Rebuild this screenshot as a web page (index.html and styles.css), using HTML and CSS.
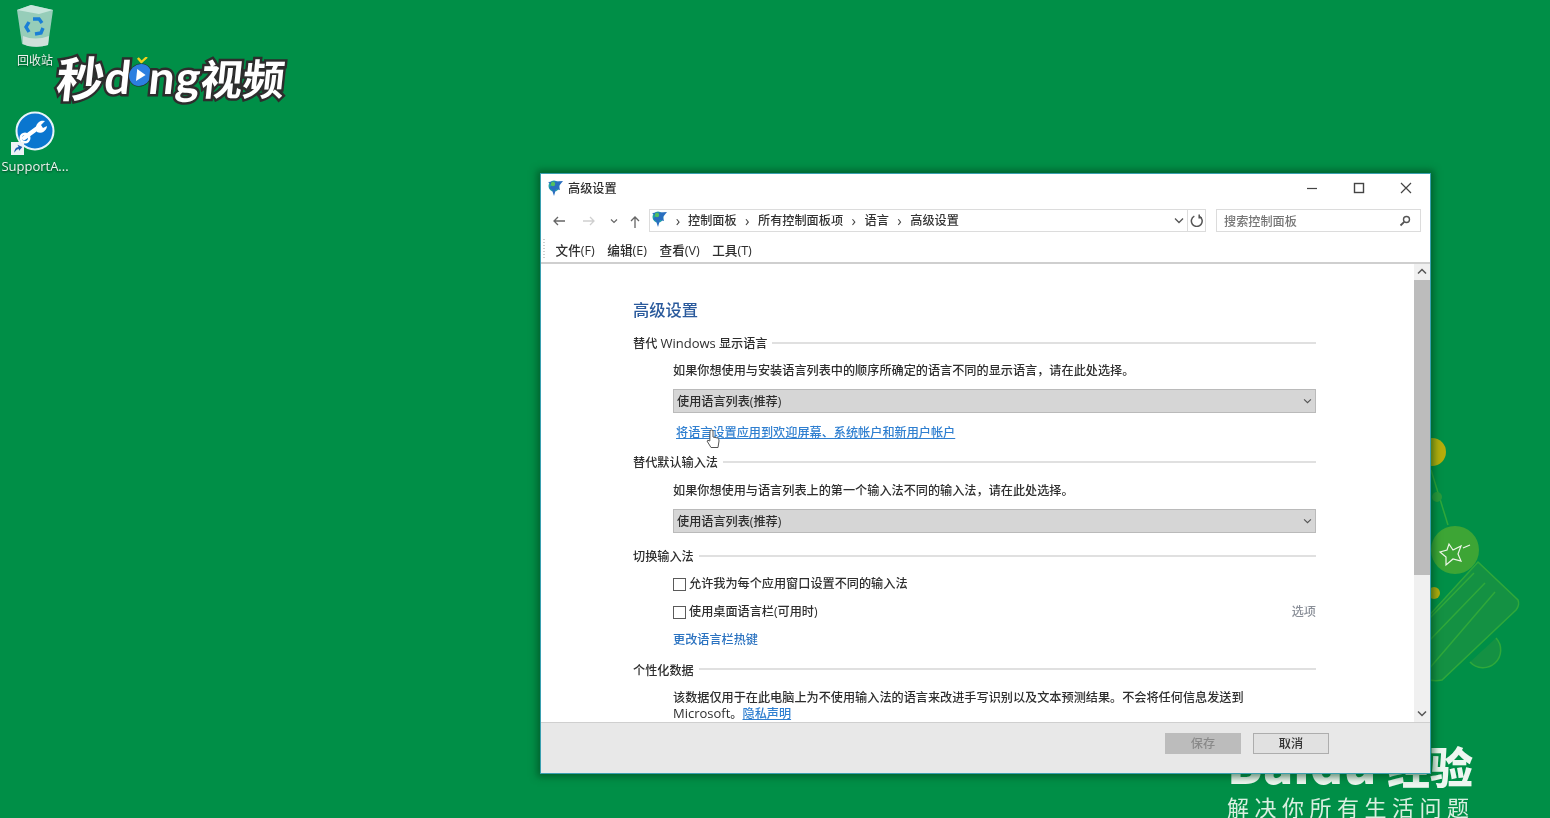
FILE: index.html
```html
<!DOCTYPE html>
<html lang="zh-CN">
<head>
<meta charset="utf-8">
<title>高级设置</title>
<link rel="stylesheet" href="styles.css">
</head>
<body>
<div class="desktop">
  <div class="desk-icon bin-icon">
    <svg width="40" height="44" viewBox="0 0 40 44">
      <path d="M2 6 L16 1 L38 6 L33 41 Q24 44 13 42 L7 40 Z" fill="#96cdb9"/>
      <path d="M2 6 L16 1 L38 6 L24 10 Z" fill="#c8e6dc"/>
      <path d="M8 32 Q20 37 34 32 L33 41 Q24 44 13 42 L8 40 Z" fill="#cfe0da"/>
      <path d="M18 15 l6 0 l3 4 M28 24 l-2 5 l-6 1 M14 28 l-3-5 l3-5" fill="none" stroke="#1a7fd6" stroke-width="3.4"/>
    </svg>
    <span class="desk-label bin-label">回收站</span>
  </div>
  <div class="desk-icon support-icon">
    <div class="support-glyph">
      <svg width="40" height="40" viewBox="0 0 40 40">
        <circle cx="20" cy="20" r="18.5" fill="#0a76cf" stroke="#e8f4fa" stroke-width="2"/>
        <path d="M9 27 L24 16" stroke="#fff" stroke-width="4.5" stroke-linecap="round"/>
        <circle cx="10" cy="27" r="4.2" fill="none" stroke="#fff" stroke-width="2.6"/>
        <path d="M21 17 a7 7 0 0 1 9-7 l-4 4 l2 3 l4-2 a7 7 0 0 1-10 6 Z" fill="#fff"/>
      </svg>
      <svg class="shortcut" width="13" height="13" viewBox="0 0 12 12">
        <rect width="12" height="12" fill="#eef2f5"/>
        <path d="M3 10 Q3 5 7 4.5 L6 2.5 L10.5 4.5 L7.5 8 L7 6.2 Q5 6.5 3 10 Z" fill="#1b5fb0"/>
      </svg>
    </div>
    <span class="desk-label support-label">SupportA...</span>
  </div>

  <div class="logo">
    <span class="logo-cjk logo-first">秒</span><span class="logo-latin">d</span><span class="logo-play"><svg width="24" height="30" viewBox="0 0 24 30"><path d="M8 1 L12 5 L17 0" fill="none" stroke="#f3d21c" stroke-width="2.4"/><circle cx="12" cy="18" r="11" fill="#2c7fe0" stroke="#2b2b2b" stroke-width="1"/><path d="M8.5 12 L17.5 18 L8.5 24 Z" fill="#fff"/></svg></span><span class="logo-latin">ng</span><span class="logo-cjk">视频</span>
  </div>

  <svg class="tree" width="110" height="270" viewBox="0 0 110 270">
    <circle cx="12" cy="22" r="14" fill="#b5ad0b"/>
    <path d="M11 40 L28 95" stroke="#2fa83a" stroke-width="1.5"/>
    <circle cx="17" cy="67" r="5" fill="#2a9a3c"/>
    <path d="M58 132 L98 170 Q100 175 96 180 L22 250 Q12 252 5 248 L5 190 Z" fill="#149143" stroke="#2fa83a" stroke-width="1.5"/>
    <path d="M54 143 L8 190 M65 153 L8 212 M75 162 L8 240" stroke="#2fa83a" stroke-width="1.5"/>
    <path d="M76 208 A14 14 0 0 1 50 232" fill="#149143" stroke="#2fa83a" stroke-width="1.5"/>
    <circle cx="14" cy="163" r="6" fill="#b5ad0b"/>
    <circle cx="35" cy="120" r="24" fill="#3da535"/>
    <path d="M29 114 L33 120 L41 116 L38 124 L41 131 L33 129 L26 135 L26 127 L20 122 L27 120 Z" fill="none" stroke="#f0f6ea" stroke-width="1.2"/>
    <path d="M43 118 L50 115" stroke="#f0f6ea" stroke-width="1.2"/>
  </svg>

  <div class="watermark">
    <div class="wm-brand"><span class="wm-latin">Baidu</span>经验</div>
    <div class="wm-slogan">解决你所有生活问题</div>
  </div>

  <section class="window">
    <header class="titlebar">
      <svg class="globe" width="17" height="17" viewBox="0 0 17 17">
        <circle cx="7" cy="6" r="5.5" fill="#1fa0a8"/>
        <path d="M1 2 L16 1 L12 6 L13 10 L9 9 L7 16 L5 10 L2 8 L5 5 Z" fill="#2a6fc0"/>
        <circle cx="6" cy="4" r="2.2" fill="#55c060"/>
      </svg>
      <span class="title-text">高级设置</span>
      <div class="window-controls">
        <svg width="12" height="12" viewBox="0 0 12 12"><path d="M1 6.5 H11" stroke="#444" stroke-width="1.2"/></svg>
        <svg width="12" height="12" viewBox="0 0 12 12"><rect x="1.5" y="1.5" width="9" height="9" fill="none" stroke="#444" stroke-width="1.4"/></svg>
        <svg width="12" height="12" viewBox="0 0 12 12"><path d="M1 1 L11 11 M11 1 L1 11" stroke="#444" stroke-width="1.2"/></svg>
      </div>
    </header>

    <div class="navbar">
      <div class="nav-buttons">
        <svg width="14" height="12" viewBox="0 0 14 12"><path d="M13 6 H2 M6 2 L2 6 L6 10" fill="none" stroke="#666" stroke-width="1.3"/></svg>
        <svg class="nav-forward" width="14" height="12" viewBox="0 0 14 12"><path d="M1 6 H12 M8 2 L12 6 L8 10" fill="none" stroke="#cfcfcf" stroke-width="1.3"/></svg>
        <svg class="nav-recent" width="8" height="6" viewBox="0 0 8 6"><path d="M1 1.5 L4 4.5 L7 1.5" fill="none" stroke="#666" stroke-width="1.2"/></svg>
        <svg class="nav-up" width="12" height="14" viewBox="0 0 12 14"><path d="M6 13 V2 M2 6 L6 2 L10 6" fill="none" stroke="#666" stroke-width="1.3"/></svg>
      </div>
      <div class="address">
        <div class="crumbs">
          <svg width="17" height="17" viewBox="0 0 17 17">
            <circle cx="7" cy="6" r="5.5" fill="#1fa0a8"/>
            <path d="M1 2 L16 1 L12 6 L13 10 L9 9 L7 16 L5 10 L2 8 L5 5 Z" fill="#2a6fc0"/>
            <circle cx="6" cy="4" r="2.2" fill="#55c060"/>
          </svg>
          <span class="crumb-sep first">›</span><span>控制面板</span>
          <span class="crumb-sep">›</span><span>所有控制面板项</span>
          <span class="crumb-sep">›</span><span>语言</span>
          <span class="crumb-sep">›</span><span>高级设置</span>
        </div>
        <svg class="address-chevron" width="10" height="7" viewBox="0 0 10 7"><path d="M1 1.5 L5 5.5 L9 1.5" fill="none" stroke="#555" stroke-width="1.3"/></svg>
        <span class="refresh">
          <svg width="13" height="13" viewBox="0 0 12 12"><path d="M4 2 A5 5 0 1 0 8.5 2 M8.5 0.5 V3.5 H11" fill="none" stroke="#555" stroke-width="1.4"/></svg>
        </span>
      </div>
      <div class="search">
        <span>搜索控制面板</span>
        <svg width="12" height="12" viewBox="0 0 12 12"><circle cx="7.5" cy="4.5" r="3" fill="none" stroke="#555" stroke-width="1.4"/><path d="M5.2 6.8 L1.5 10.5" stroke="#555" stroke-width="1.8"/></svg>
      </div>
    </div>

    <nav class="menubar">
      <span class="menu-grip"></span>
      <span>文件(F)</span>
      <span>编辑(E)</span>
      <span>查看(V)</span>
      <span>工具(T)</span>
    </nav>

    <div class="pane">
      <main class="content">
        <h1 class="page-title">高级设置</h1>

        <section class="group">
          <h2 class="group-head"><span>替代 <span class="latin">Windows</span> 显示语言</span></h2>
          <div class="group-body">
            <p class="row">如果你想使用与安装语言列表中的顺序所确定的语言不同的显示语言，请在此处选择。</p>
            <div class="select">
              <span>使用语言列表(推荐)</span>
              <svg width="9" height="6" viewBox="0 0 10 7"><path d="M1 1.5 L5 5.5 L9 1.5" fill="none" stroke="#555" stroke-width="1.3"/></svg>
            </div>
            <a class="link wide-link">将语言设置应用到欢迎屏幕、系统帐户和新用户帐户</a>
          </div>
        </section>

        <section class="group tall">
          <h2 class="group-head spaced"><span>替代默认输入法</span></h2>
          <div class="group-body">
            <p class="row">如果你想使用与语言列表上的第一个输入法不同的输入法，请在此处选择。</p>
            <div class="select">
              <span>使用语言列表(推荐)</span>
              <svg width="9" height="6" viewBox="0 0 10 7"><path d="M1 1.5 L5 5.5 L9 1.5" fill="none" stroke="#555" stroke-width="1.3"/></svg>
            </div>
          </div>
        </section>

        <section class="group short">
          <h2 class="group-head spaced"><span>切换输入法</span></h2>
          <div class="group-body roomy">
            <label class="check"><span class="box"></span>允许我为每个应用窗口设置不同的输入法</label>
            <div class="check-row">
              <label class="check"><span class="box"></span>使用桌面语言栏(可用时)</label>
              <span class="muted">选项</span>
            </div>
            <a class="link plain-link">更改语言栏热键</a>
          </div>
        </section>

        <section class="group last">
          <h2 class="group-head spaced"><span>个性化数据</span></h2>
          <div class="group-body">
            <p class="row">该数据仅用于在此电脑上为不使用输入法的语言来改进手写识别以及文本预测结果。不会将任何信息发送到<br><span class="latin">Microsoft</span>。<a class="link">隐私声明</a></p>
          </div>
        </section>
      </main>

      <aside class="scrollbar">
        <svg width="10" height="7" viewBox="0 0 10 7"><path d="M1 5.5 L5 1.5 L9 5.5" fill="none" stroke="#555" stroke-width="1.5"/></svg>
        <div class="thumb"></div>
        <svg class="scroll-down" width="10" height="7" viewBox="0 0 10 7"><path d="M1 1.5 L5 5.5 L9 1.5" fill="none" stroke="#555" stroke-width="1.5"/></svg>
      </aside>
    </div>

    <footer class="actions">
      <button class="btn disabled">保存</button>
      <button class="btn">取消</button>
    </footer>

    <svg class="cursor" width="16" height="20" viewBox="0 0 16 20">
      <path d="M5 1.5 Q6.5 0.5 8 1.5 L8 8 L12.5 9 Q14.5 10 14 12 L13 18.5 H6 L2 12 Q2 10.5 4.8 12 Z" fill="#fff" stroke="#555" stroke-width="1"/>
    </svg>
  </section>
</div>
</body>
</html>
```

FILE: styles.css
```css
* { box-sizing: border-box; }

html, body {
  margin: 0;
  height: 100%;
  overflow: hidden;
}

body {
  font-family: "Open Sans", "Noto Sans CJK SC", sans-serif;
  font-size: 12.15px;
  font-weight: 500;
  color: #2e2e2e;
}

.latin { font-size: 13px; line-height: 0; }

.desktop {
  position: relative;
  width: 1550px;
  height: 818px;
  overflow: hidden;
  background: #008f47;
  filter: blur(0.35px);
}

/* Desktop icons sit on a free canvas */
.desk-icon {
  position: absolute;
  display: flex;
  flex-direction: column;
  align-items: center;
  width: 70px;
}

.bin-icon { left: 0; top: 4px; }
.support-icon { left: 0; top: 111px; }

.support-glyph { position: relative; height: 40px; }

.shortcut {
  position: absolute;
  left: -4px;
  top: 31px;
}

.desk-label {
  color: #eef5f0;
  font-weight: 400;
  text-shadow: 0 1px 2px rgba(0, 0, 0, .55);
  white-space: nowrap;
}

.bin-label { margin-top: 5px; font-size: 12px; line-height: 16px; }
.support-label { margin-top: 7px; font-size: 13px; line-height: 16px; }

.logo {
  position: absolute;
  left: 57px;
  top: 46px;
  display: flex;
  align-items: center;
  height: 60px;
  color: #fff;
  font-weight: 700;
  -webkit-text-stroke: 5px #2d2d2d;
  paint-order: stroke fill;
  transform: skewX(-6deg);
}

.logo-cjk { font-family: "Noto Sans CJK SC", sans-serif; font-size: 42px; }
.logo-first { font-size: 48px; }
.logo-latin { font-family: "Lato", sans-serif; font-size: 46px; letter-spacing: 1px; }
.logo-play { display: flex; margin: -8px -3px 0 -4px; }

.tree {
  position: absolute;
  left: 1420px;
  top: 430px;
}

.watermark {
  position: absolute;
  left: 1227px;
  top: 737px;
  width: 246px;
  color: #fff;
}

.wm-brand {
  display: flex;
  align-items: baseline;
  justify-content: space-between;
  height: 50px;
  font-family: "Noto Sans CJK SC", sans-serif;
  font-size: 43px;
  font-weight: 900;
  line-height: 50px;
  white-space: nowrap;
  color: #eef6f0;
}

.wm-latin { font-size: 51px; line-height: 50px; }

.wm-slogan {
  margin-top: 6px;
  font-family: "Noto Sans CJK SC", sans-serif;
  font-size: 22px;
  font-weight: 400;
  line-height: 26px;
  letter-spacing: 5.5px;
  white-space: nowrap;
  color: #d9efe0;
}

/* Window */
.window {
  position: absolute;
  left: 540px;
  top: 173px;
  width: 891px;
  height: 601px;
  display: flex;
  flex-direction: column;
  background: #fff;
  border: 1px solid #3aa0b0;
  box-shadow: 0 0 7px 3px rgba(0, 70, 30, .6);
}

.titlebar {
  display: flex;
  align-items: center;
  height: 28px;
  padding: 0 18px 0 6px;
  flex: none;
}

.title-text { margin-left: 4px; }

.window-controls {
  display: flex;
  gap: 35px;
  margin-left: auto;
}

.navbar {
  display: flex;
  align-items: center;
  height: 23px;
  margin-top: 7px;
  flex: none;
  padding-right: 9px;
}

.nav-buttons {
  display: flex;
  align-items: center;
  width: 108px;
  padding-left: 11px;
  flex: none;
}

.nav-forward { margin-left: 16px; }
.nav-recent { margin-left: 14px; }
.nav-up { margin-left: 11px; margin-top: 2px; }

.address {
  display: flex;
  align-items: center;
  width: 557px;
  height: 23px;
  padding-left: 1px;
  border: 1px solid #dcdcdc;
  flex: none;
}

.crumbs {
  display: flex;
  align-items: center;
  padding-bottom: 2px;
  color: #333;
}

.crumb-sep {
  width: 21.5px;
  text-align: center;
  color: #444;
  font-size: 15px;
  line-height: 16px;
}

.crumb-sep.first { width: 20px; }

.address-chevron { margin-left: auto; margin-right: 3px; }

.refresh {
  display: flex;
  align-items: center;
  justify-content: center;
  width: 18px;
  height: 21px;
  border-left: 1px solid #dcdcdc;
}

.search {
  display: flex;
  align-items: center;
  justify-content: space-between;
  width: 205px;
  height: 23px;
  margin-left: 10px;
  padding: 0 9px 0 7px;
  border: 1px solid #dcdcdc;
  color: #777;
  flex: none;
}

.menubar {
  display: flex;
  align-items: center;
  gap: 12.6px;
  height: 24px;
  margin-top: 6px;
  padding: 0 0 2px 2px;
  font-size: 12.6px;
  flex: none;
}

.menu-grip {
  width: 2px;
  height: 20px;
  margin-right: -2px;
  background: repeating-linear-gradient(#cfcfcf 0 1px, transparent 1px 3px);
}

.pane {
  display: flex;
  flex: 1;
  min-height: 0;
  border-top: 2px solid #cfcfcf;
}

.content {
  flex: 1;
  min-width: 0;
  overflow: hidden;
  padding: 35px 98px 0 92px;
}

.page-title {
  margin: 0 0 14px;
  font-size: 16.3px;
  font-weight: 500;
  line-height: 22px;
  color: #2a5a9c;
}

.group { margin-bottom: 14px; }
.group.tall { margin-bottom: 15px; }
.group.short { margin-bottom: 13px; }
.group.last { margin-bottom: 0; }

.group-head {
  display: flex;
  align-items: center;
  gap: 5px;
  height: 16px;
  margin: 0 0 11px;
  font-size: inherit;
  font-weight: inherit;
  line-height: 16px;
}

.group-head.spaced { margin-bottom: 12px; }

.group-head > span { padding-top: 2px; }
.group.last .group-head > span { padding-top: 4px; }

.group-head::after {
  content: "";
  flex: 1;
  height: 2px;
  background: #e0e0e0;
}

.group-body {
  display: flex;
  flex-direction: column;
  align-items: flex-start;
  gap: 11px;
  padding-left: 40px;
}

.group-body.roomy { gap: 12px; }

.row {
  margin: 0 0 -1px;
  padding-top: 1px;
  line-height: 16px;
}

.select {
  display: flex;
  align-items: center;
  justify-content: space-between;
  width: 100%;
  height: 24px;
  padding: 0 3px 0 3px;
  background: #d6d6d6;
  border: 1px solid #bababa;
}

.link {
  line-height: 16px;
  color: #2f7fd0;
  text-decoration: underline;
}

.wide-link { margin: 0 0 -1px 3px; padding-top: 1px; }
.plain-link { height: 16px; text-decoration: none; color: #2a72c0; }

.check {
  display: flex;
  align-items: center;
  gap: 3px;
  height: 16px;
  line-height: 16px;
}

.box {
  width: 13px;
  height: 13px;
  border: 1px solid #5a5a5a;
  background: #fff;
}

.check-row {
  display: flex;
  align-items: center;
  justify-content: space-between;
  width: 100%;
  height: 16px;
}

.muted { line-height: 16px; color: #8a8f98; }

.scrollbar {
  display: flex;
  flex-direction: column;
  align-items: center;
  width: 16px;
  flex: none;
  background: #f0f0f0;
  padding-top: 4px;
}

.thumb {
  width: 16px;
  height: 295px;
  margin-top: 5px;
  background: #bcbcbc;
}

.scroll-down { margin-top: auto; margin-bottom: 5px; }

.actions {
  display: flex;
  justify-content: flex-end;
  gap: 12px;
  height: 51px;
  padding: 10px 101px 0 0;
  background: #e8e8e8;
  border-top: 1px solid #cfcfcf;
  flex: none;
}

.btn {
  width: 76px;
  height: 21px;
  padding: 0 0 1px;
  font: inherit;
  color: #333;
  background: #e1e1e1;
  border: 1px solid #adadad;
}

.btn.disabled {
  background: #bcbcbc;
  border-color: #bcbcbc;
  color: #8a8a8a;
}

/* Mouse pointer floats above the window */
.cursor {
  position: absolute;
  left: 164px;
  top: 255px;
}
```
